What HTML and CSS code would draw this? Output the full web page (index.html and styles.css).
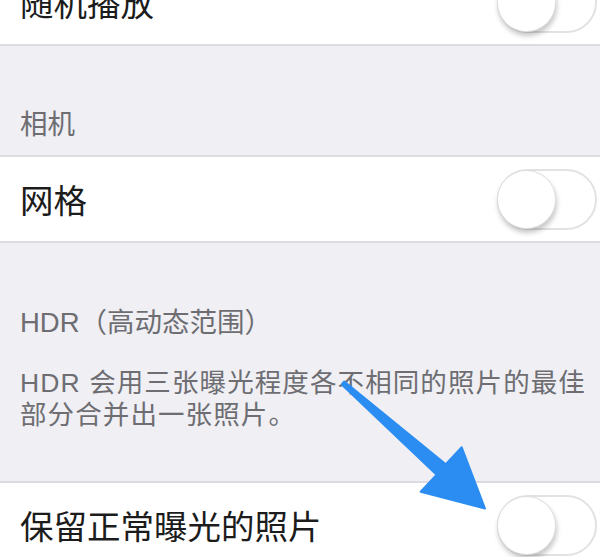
FILE: index.html
```html
<!DOCTYPE html>
<html lang="zh-CN">
<head>
<meta charset="utf-8">
<title>相机设置</title>
<link rel="stylesheet" href="styles.css">
</head>
<body>
<div class="screen">
  <div class="cell cell-first">
    <span class="cell-label">随机播放</span>
    <span class="switch"><span class="knob"></span></span>
  </div>
  <div class="group-header"><span class="header-text">相机</span></div>
  <div class="cell">
    <span class="cell-label">网格</span>
    <span class="switch"><span class="knob"></span></span>
  </div>
  <div class="group-gap">
    <div class="group-header group-header-hdr"><span class="header-text">HDR（高动态范围）</span></div>
    <p class="group-footer">HDR 会用三张曝光程度各不相同的照片的最佳部分合并出一张照片。</p>
  </div>
  <div class="cell">
    <span class="cell-label">保留正常曝光的照片</span>
    <span class="switch"><span class="knob"></span></span>
  </div>
</div>
<svg class="arrow" viewBox="0 0 600 557" width="600" height="557" aria-hidden="true">
  <polygon points="344.3,381.5 445.8,464.2 461.7,447.3 485,508.5 420.7,491.7 436.6,474.8 341.7,384.5" fill="#2b8df2" stroke="#2b8df2" stroke-width="2" stroke-linejoin="round"/>
</svg>
</body>
</html>
```
FILE: styles.css
```css
html, body {
  margin: 0;
  padding: 0;
}
body {
  width: 600px;
  height: 557px;
  overflow: hidden;
  background: #efeff4;
  position: relative;
  font-family: "Liberation Sans", "Noto Sans CJK SC", sans-serif;
}
.screen {
  display: flex;
  flex-direction: column;
}
.cell {
  height: 84px;
  background: #ffffff;
  border-top: 2px solid #dcdce0;
  border-bottom: 2px solid #dcdce0;
  display: flex;
  align-items: center;
  justify-content: space-between;
  padding: 0 3px 0 20px;
  flex-shrink: 0;
}
.cell-first {
  margin-top: -42px;
}
.cell-label {
  font-family: "Noto Sans CJK SC", sans-serif;
  font-size: 33.5px;
  line-height: 1;
  color: #1c1c1c;
}
.switch {
  position: relative;
  width: 96px;
  height: 57px;
  border: 2px solid #e2e2e5;
  border-radius: 32px;
  background: #ffffff;
  flex-shrink: 0;
}
.knob {
  position: absolute;
  left: -2px;
  top: -1px;
  width: 57px;
  height: 57px;
  border-radius: 50%;
  background: #ffffff;
  border: 1px solid rgba(0, 0, 0, 0.12);
  box-shadow: 1px 4px 5px rgba(0, 0, 0, 0.22);
}
.group-header {
  padding: 65px 20px 16px;
}
.header-text {
  display: block;
  font-size: 27.5px;
  line-height: 28px;
  color: #6d6d72;
}
.group-gap {
  display: flex;
  flex-direction: column;
}
.group-header-hdr {
  padding: 66px 20px 0;
}
.group-footer {
  margin: 0;
  padding: 30px 8px 50px 20px;
  font-size: 26.5px;
  line-height: 32px;
  letter-spacing: 1.1px;
  color: #6d6d72;
}
.arrow {
  position: absolute;
  left: 0;
  top: 0;
  pointer-events: none;
}
```
